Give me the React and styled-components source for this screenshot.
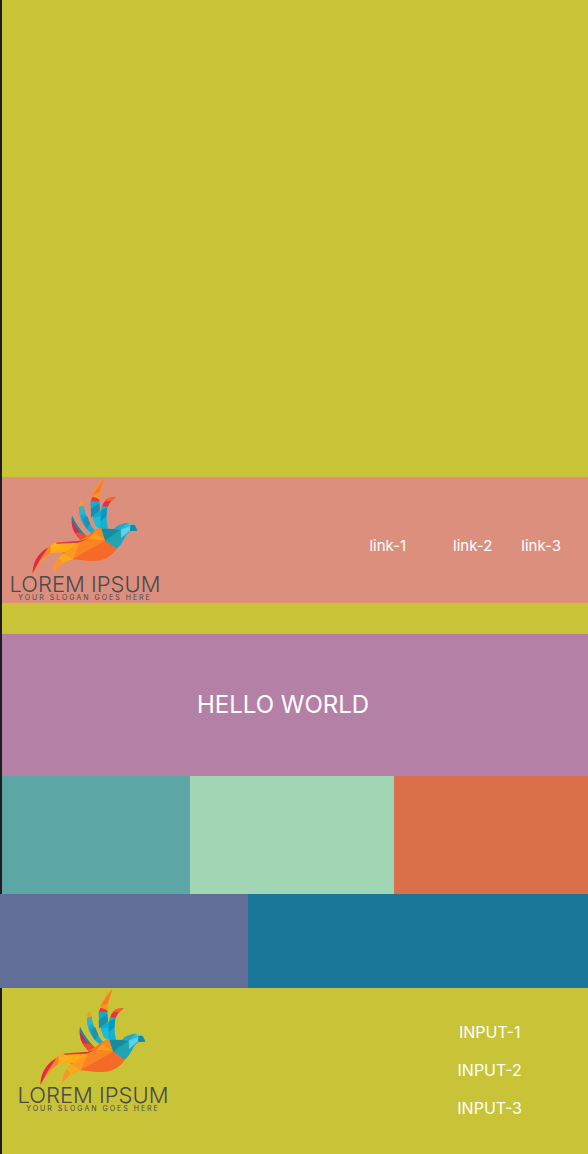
import React from "react";
import styled, { createGlobalStyle } from "styled-components";

const GlobalStyle = createGlobalStyle`
  *, *::before, *::after { box-sizing: border-box; }
  body {
    margin: 0;
    background: #c8c337;
    color: #fff;
    font-family: Inter, "Liberation Sans", sans-serif;
  }
`;

const Page = styled.div`
  display: flex;
  flex-direction: column;
  min-height: 100vh;
`;

const Edged = styled.div`
  border-left: 2px solid #1e1c20;
`;

const Spacer = styled(Edged)`
  height: ${(p) => p.$height}px;
`;

const Header = styled(Edged).attrs({ as: "header" })`
  display: flex;
  justify-content: space-between;
  align-items: center;
  height: 126px;
  padding: 0 27px 0 6px;
  background: #dd8f7e;
`;

const Nav = styled.nav`
  display: flex;
  gap: 29px;
  padding-top: 12px;
`;

const NavLink = styled.a`
  color: #fff;
  font-size: 15px;
  line-height: 20px;
  text-decoration: none;

  &:first-child {
    margin-right: 18px;
  }
`;

const Hero = styled(Edged).attrs({ as: "main" })`
  display: flex;
  justify-content: center;
  align-items: center;
  height: 142px;
  padding-right: 24px;
  background: #b580a6;
`;

const Title = styled.h1`
  margin: 0;
  font-size: 24px;
  font-weight: 400;
  line-height: 30px;
`;

const ThreeTiles = styled(Edged)`
  display: grid;
  grid-template-columns: 188fr 204fr 194fr;
  height: 118px;
`;

const TwoTiles = styled.div`
  display: grid;
  grid-template-columns: 248fr 340fr;
  height: 94px;
`;

const Tile = styled.div`
  background: ${(p) => p.$color};
`;

const Footer = styled(Edged).attrs({ as: "footer" })`
  display: flex;
  flex: 1;
  justify-content: space-between;
  align-items: flex-start;
  padding: 0 66px 0 14px;
`;

const InputList = styled.ul`
  display: flex;
  flex-direction: column;
  align-items: center;
  gap: 16px;
  margin: 0;
  padding: 33px 0 24px;
  list-style: none;
  font-size: 16px;
  line-height: 22px;
`;

const LogoLink = styled.a`
  display: flex;
  flex-direction: column;
  align-items: center;
  width: 154px;
  height: 126px;
  color: #4b4a4c;
  text-decoration: none;
`;

const BirdArt = styled.svg`
  display: block;
  flex: none;
  align-self: flex-start;
  width: 152px;
  height: 98px;
`;

const Wordmark = styled.span`
  font-size: 22px;
  font-weight: 300;
  line-height: 18px;
  white-space: nowrap;
`;

const Slogan = styled.span`
  font-size: 7px;
  line-height: 10px;
  letter-spacing: 2px;
  white-space: nowrap;
`;

function Bird() {
  return (
    <BirdArt viewBox="24 21 456 294" aria-hidden="true">
      {/* long feather */}
      <path d="M313 23 Q286 47 277 78 L273 94 L298 93 Q300 59 313 23Z" fill="#fb961f" />
      <path d="M313 23 L277 76 L299 67Z" fill="#f97c25" />
      <path d="M277 80 L290 84 L299 90 L298 95 L272 95Z" fill="#e73c36" />
      <path d="M272 94 L298 93 Q298 130 317 157 L310 184 L299 176 Q270 142 272 94Z" fill="#0eaccd" />
      <path d="M272 117 L298 100 L299 120 L273 143Z" fill="#168fb2" />
      <path d="M277 143 L302 139 L302 177 L288 170Z" fill="#20b9d8" />
      {/* right feather */}
      <path d="M347 82 Q315 81 306 110 L323 111 Q330 94 347 82Z" fill="#e92f42" />
      <path d="M347 82 L323 84 L313 94 L335 93Z" fill="#fb6128" />
      <path d="M306 109 L323 110 Q316 142 324 176 L309 178 Q295 141 306 109Z" fill="#13b2d3" />
      <path d="M304 121 L321 113 L319 139 L302 154Z" fill="#0898bf" />
      {/* middle feather */}
      <path d="M244 91 Q235 101 237 113 L251 110 Q251 98 244 91Z" fill="#f59b2c" />
      <path d="M237 112 L250 107 Q256 147 286 185 L280 194 Q237 164 237 112Z" fill="#0baed0" />
      <path d="M248 147 L261 137 L271 161 L260 178Z" fill="#248fb1" />
      <path d="M237 112 L250 107 L254 128 L240 138Z" fill="#27b7cf" />
      {/* short feather */}
      <path d="M216 138 Q209 179 239 207 L263 204 Q232 175 216 138Z" fill="#df2547" />
      <path d="M216 138 L215 151 L240 190 L266 205 Q234 176 216 138Z" fill="#168ba5" />
      <path d="M224 187 L249 190 L267 205 L244 212Z" fill="#f44d2e" />
      {/* body */}
      <path d="M169 217 L239 213 L286 181 L304 174 L316 212 L350 236 Q322 278 264 272 L218 268 L190 251Z" fill="#fb7329" />
      <path d="M262 207 L304 174 L315 211Z" fill="#fba016" />
      <path d="M304 174 L280 187 L315 211Z" fill="#f88b20" />
      <path d="M238 214 L262 206 L316 212 L231 238Z" fill="#fa8521" />
      <path d="M231 238 L316 212 L277 239 L218 268Z" fill="#fa8423" />
      <path d="M316 212 L350 236 Q322 278 264 272 L218 267Z" fill="#f56a27" />
      {/* tail */}
      <path d="M153 225 Q103 251 97 311 Q117 276 151 249 L198 246 Q163 265 162 306 Q181 277 218 268 L240 214 L169 217Z" fill="#fdab15" />
      <path d="M153 225 Q105 250 97 311 L126 268 L151 249Z" fill="#f98625" />
      <path d="M145 232 Q99 258 97 311 L119 271Z" fill="#e3284c" />
      <path d="M153 225 L174 221 L188 234 L151 249Z" fill="#fcb020" />
      <path d="M199 246 Q163 265 162 306 L189 277 L218 268Z" fill="#f9952a" />
      <path d="M199 246 L176 264 L189 277 L218 268Z" fill="#fbaa20" />
      <path d="M240 214 L218 268 L190 251Z" fill="#fa9a20" />
      <path d="M166 218 L239 212 L263 207 L235 218 L171 221Z" fill="#dd3541" />
      {/* breast and head */}
      <path d="M304 176 L342 177 Q356 160 384 158 L404 165 L412 182 L391 183 Q377 193 371 209 Q364 224 350 236 L316 212Z" fill="#1fa5b6" />
      <path d="M304 176 L342 177 L362 179 L316 212Z" fill="#168ca4" />
      <path d="M342 177 Q356 160 384 158 L362 179Z" fill="#25a7c7" />
      <path d="M362 179 L384 158 L404 165 L386 185 L363 204Z" fill="#5bd1ed" />
      <path d="M362 179 L390 169 L384 158Z" fill="#35b5cf" />
      <path d="M362 179 L363 207 L316 212Z" fill="#20a5ad" />
      <path d="M391 164 L404 165 L412 182 L390 182Z" fill="#168ba7" />
    </BirdArt>
  );
}

function Logo() {
  return (
    <LogoLink href="#">
      <Bird />
      <Wordmark>LOREM IPSUM</Wordmark>
      <Slogan>YOUR SLOGAN GOES HERE</Slogan>
    </LogoLink>
  );
}

export default function App() {
  return (
    <Page>
      <GlobalStyle />
      <Spacer $height={477} />
      <Header>
        <Logo />
        <Nav>
          <NavLink href="#">link-1</NavLink>
          <NavLink href="#">link-2</NavLink>
          <NavLink href="#">link-3</NavLink>
        </Nav>
      </Header>
      <Spacer $height={31} />
      <Hero>
        <Title>HELLO WORLD</Title>
      </Hero>
      <ThreeTiles>
        <Tile $color="#5ca6a5" />
        <Tile $color="#a0d6b4" />
        <Tile $color="#db6f4a" />
      </ThreeTiles>
      <TwoTiles>
        <Tile $color="#616f98" />
        <Tile $color="#1a779a" />
      </TwoTiles>
      <Footer>
        <Logo />
        <InputList>
          <li>INPUT-1</li>
          <li>INPUT-2</li>
          <li>INPUT-3</li>
        </InputList>
      </Footer>
    </Page>
  );
}
